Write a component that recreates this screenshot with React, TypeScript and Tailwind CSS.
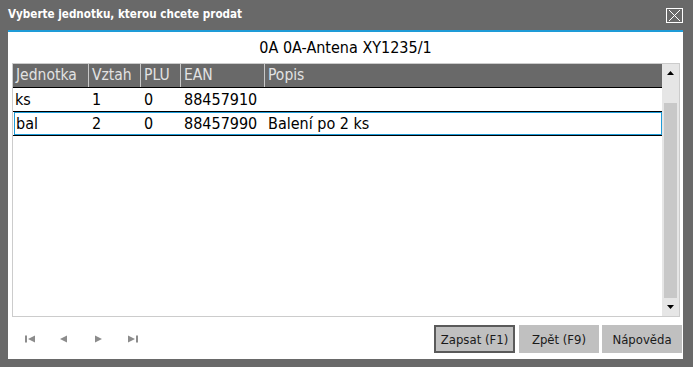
import React from "react";

const FONT = '"DejaVu Sans Condensed", "DejaVu Sans", sans-serif';

function Tri({ dir }: { dir: "first" | "prev" | "next" | "last" }) {
  return (
    <svg width="11" height="8" viewBox="0 0 11 8" className="block">
      {dir === "first" && (
        <>
          <rect x="0" y="0.5" width="2" height="7" fill="#8c8c8c" />
          <polygon points="3,4 10,0.5 10,7.5" fill="#8c8c8c" />
        </>
      )}
      {dir === "prev" && <polygon points="1,4 8,0.5 8,7.5" fill="#8c8c8c" />}
      {dir === "next" && <polygon points="9,4 2,0.5 2,7.5" fill="#8c8c8c" />}
      {dir === "last" && (
        <>
          <polygon points="8,4 1,0.5 1,7.5" fill="#8c8c8c" />
          <rect x="9" y="0.5" width="2" height="7" fill="#8c8c8c" />
        </>
      )}
    </svg>
  );
}

const cols = [
  { key: "j", title: "Jednotka", w: "w-[76px]" },
  { key: "v", title: "Vztah", w: "w-[52px]" },
  { key: "p", title: "PLU", w: "w-[40px]" },
  { key: "e", title: "EAN", w: "w-[84px]" },
];

const rows = [
  ["ks", "1", "0", "88457910", ""],
  ["bal", "2", "0", "88457990", "Balení po 2 ks"],
];

export default function App() {
  return (
    <div
      className="w-[693px] h-[367px] bg-[#696969] flex flex-col overflow-hidden"
      style={{ fontFamily: FONT }}
    >
      {/* title bar */}
      <div className="h-[30px] flex items-center justify-between pl-[8px] pr-[10px] shrink-0">
        <span className="text-white font-bold text-[11.6px] leading-none">
          Vyberte jednotku, kterou chcete prodat
        </span>
        <svg width="17" height="15" viewBox="0 0 17 15" className="block">
          <rect x="0.5" y="0.5" width="16" height="14" fill="none" stroke="#ffffff" strokeWidth="1" />
          <line x1="3" y1="2" x2="14" y2="13" stroke="#ffffff" strokeWidth="1" />
          <line x1="14" y1="2" x2="3" y2="13" stroke="#ffffff" strokeWidth="1" />
        </svg>
      </div>

      {/* content */}
      <div className="ml-[8px] mr-[10px] mb-[8px] flex-1 bg-white border-t-2 border-[#1e9bd7] flex flex-col">
        <div className="h-[31px] flex items-center justify-center text-[16px] text-black leading-none">
          0A 0A-Antena XY1235/1
        </div>

        {/* grid */}
        <div className="ml-[4px] mr-[3px] h-[254px] border border-[#cccccc] flex">
          <div className="flex-1 flex flex-col">
            <div className="h-[24px] bg-[#696969] border-b border-black flex text-[15.5px] text-[#e2e2e2] leading-none">
              {cols.map((c) => (
                <div key={c.key} className={`${c.w} border-r border-[#c8c8c8] flex items-center pl-[3px] pt-[1px]`}>
                  {c.title}
                </div>
              ))}
              <div className="flex-1 flex items-center pl-[3px] pt-[1px]">Popis</div>
            </div>
            {rows.map((r, i) => {
              const sel = i === 1;
              return (
                <div
                  key={i}
                  className={sel ? "h-[25px] border-y border-black pl-[1px]" : "h-[23px]"}
                >
                  <div
                    className={
                      sel
                        ? "h-full border border-[#1e9bd7] flex text-[16px] text-black leading-none"
                        : "h-full flex text-[16px] text-black leading-none"
                    }
                  >
                    {cols.map((c, ci) => (
                      <div
                        key={c.key}
                        className={`${c.w} flex items-center ${sel ? (ci === 0 ? "pl-[1px]" : "pl-[3px]") : ci === 0 ? "pl-[2px]" : "pl-[3px]"}`}
                        style={sel && ci === 0 ? { width: 74 } : undefined}
                      >
                        {r[ci]}
                      </div>
                    ))}
                    <div className="flex-1 flex items-center pl-[3px]">{r[4]}</div>
                  </div>
                </div>
              );
            })}
          </div>
          {/* scrollbar */}
          <div className="w-[17px] bg-[#e6e6e6] flex flex-col items-center">
            <div className="h-[18px] flex items-center justify-center">
              <svg width="7" height="4" viewBox="0 0 7 4" className="block">
                <polygon points="3.5,0 7,4 0,4" fill="#000" />
              </svg>
            </div>
            <div className="mt-[21px] w-[13px] h-[195px] bg-[#c8c8c8]" />
            <div className="flex-1 flex items-center justify-center">
              <svg width="7" height="4" viewBox="0 0 7 4" className="block">
                <polygon points="0,0 7,0 3.5,4" fill="#000" />
              </svg>
            </div>
          </div>
        </div>

        {/* bottom bar */}
        <div className="flex-1 flex items-start pt-[8px]">
          <div className="flex items-center h-[28px] pl-[17px] gap-[23px]">
            <Tri dir="first" />
            <Tri dir="prev" />
            <Tri dir="next" />
            <Tri dir="last" />
          </div>
          <div className="ml-auto mr-[1px] flex">
            <button className="w-[81px] h-[28px] bg-[#c0c0c0] border-2 border-[#5a5a5a] text-[13px] text-[#1a1a1a] leading-none">
              Zapsat (F1)
            </button>
            <button className="ml-[4px] w-[80px] h-[28px] bg-[#c0c0c0] text-[13px] text-[#1a1a1a] leading-none">
              Zpět (F9)
            </button>
            <button className="ml-[3px] w-[80px] h-[28px] bg-[#c0c0c0] text-[13px] text-[#1a1a1a] leading-none">
              Nápověda
            </button>
          </div>
        </div>
      </div>
    </div>
  );
}
